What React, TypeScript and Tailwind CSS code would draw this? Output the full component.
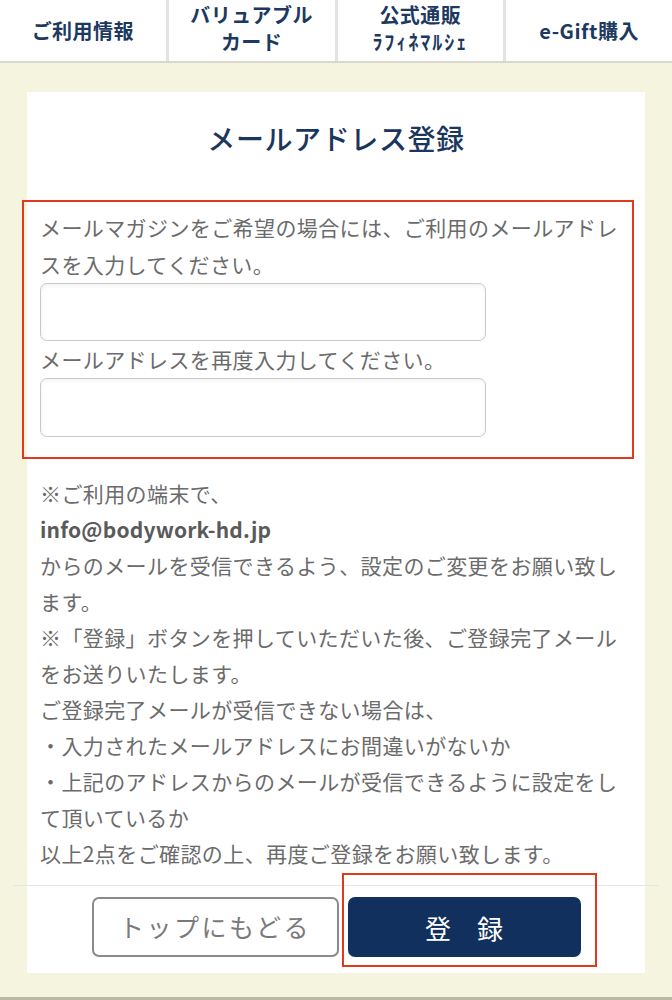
import React from 'react';

const font = { fontFamily: '"Noto Sans CJK JP", "Noto Sans", sans-serif' };

const tabs = [
  { lines: ['ご利用情報'] },
  { lines: ['バリュアブル', 'カード'] },
  { lines: ['公式通販', 'ﾗﾌｨﾈﾏﾙｼｪ'] },
  { lines: ['e-Gift購入'] },
];

const NavTab = ({ lines, last }: { lines: string[]; last?: boolean }) => (
  <div
    className={`flex-1 flex flex-col items-center justify-center text-[#1d3960] font-bold ${lines.length > 1 ? 'pb-[6px]' : ''} ${last ? '' : 'border-r-[3px] border-[#e4e4e4]'}`}
  >
    {lines.map((line, i) => (
      <span
        key={i}
        className={
          line === 'ﾗﾌｨﾈﾏﾙｼｪ'
            ? 'text-[20px] leading-[27px] tracking-[2px] font-semibold'
            : 'text-[20px] leading-[27px] tracking-[0.5px]'
        }
      >
        {line}
      </span>
    ))}
  </div>
);

export default function App() {
  return (
    <div className="min-h-[1000px] bg-[#f4f4df] flex flex-col" style={font}>
      {/* top nav, scrolled slightly */}
      <div className="h-[63px] bg-white flex border-b-2 border-[#d8d8d0] overflow-hidden">
        {tabs.map((t, i) => (
          <NavTab key={i} lines={t.lines} last={i === tabs.length - 1} />
        ))}
      </div>

      <div className="mx-[27px] mt-[29px] bg-white">
        <h1 className="pt-[28px] text-center text-[28px] leading-[36px] font-medium text-[#1b365d] tracking-[0.6px]">
          メールアドレス登録
        </h1>

        {/* highlighted form block */}
        <div className="mt-[44px] -ml-[5px] mr-[11px] border-2 border-[#e0391e] pt-[7px] pb-[20px] pl-[16px] pr-[6px]">
          <p className="text-[21px] leading-[37px] text-[#6b6b6b] tracking-[0.4px]">
            メールマガジンをご希望の場合には、ご利用のメールアドレ<br />スを入力してください。
          </p>
          <input className="block w-[446px] h-[58px] border-[1.5px] border-[#c9c9c9] rounded-[7px] shadow-inner bg-white" />
          <p className="text-[21px] leading-[37px] text-[#6b6b6b] tracking-[0.4px]">
            メールアドレスを再度入力してください。
          </p>
          <input className="block w-[446px] h-[59px] border-[1.5px] border-[#c9c9c9] rounded-[7px] shadow-inner bg-white" />
        </div>

        <div className="mt-[16px] px-[13px] text-[21px] leading-[36px] text-[#6b6b6b] tracking-[0.4px]">
          <p>※ご利用の端末で、</p>
          <p className="font-semibold text-[#5a5a5a] tracking-[0.2px]">info@bodywork-hd.jp</p>
          <p>
            からのメールを受信できるよう、設定のご変更をお願い致し<br />ます。
          </p>
          <p>
            ※「登録」ボタンを押していただいた後、ご登録完了メール<br />をお送りいたします。
          </p>
          <p>ご登録完了メールが受信できない場合は、</p>
          <p>・入力されたメールアドレスにお間違いがないか</p>
          <p>
            ・上記のアドレスからのメールが受信できるように設定をし<br />て頂いているか
          </p>
          <p>以上2点をご確認の上、再度ご登録をお願い致します。</p>
        </div>

        <div className="mt-[14px] -mx-[14px] border-t border-[#e6e6e6]" />

        <div className="flex justify-center gap-[9px] pt-[11px] pb-[16px]">
          <button className="w-[247px] h-[60px] border-2 border-[#8a8a8a] rounded-[7px] text-[25px] text-[#7a7a7a] tracking-[2.5px]">
            トップにもどる
          </button>
          <div className="relative">
            <button className="w-[233px] h-[60px] bg-[#12305d] rounded-[7px] text-[26px] text-white">
              登　録
            </button>
            <span className="absolute -left-[6px] -top-[24px] -right-[16px] -bottom-[10px] border-2 border-[#e0391e] pointer-events-none" />
          </div>
        </div>
      </div>

      <div className="mt-auto border-t-[3px] border-[#b9b9a8]" />
    </div>
  );
}
